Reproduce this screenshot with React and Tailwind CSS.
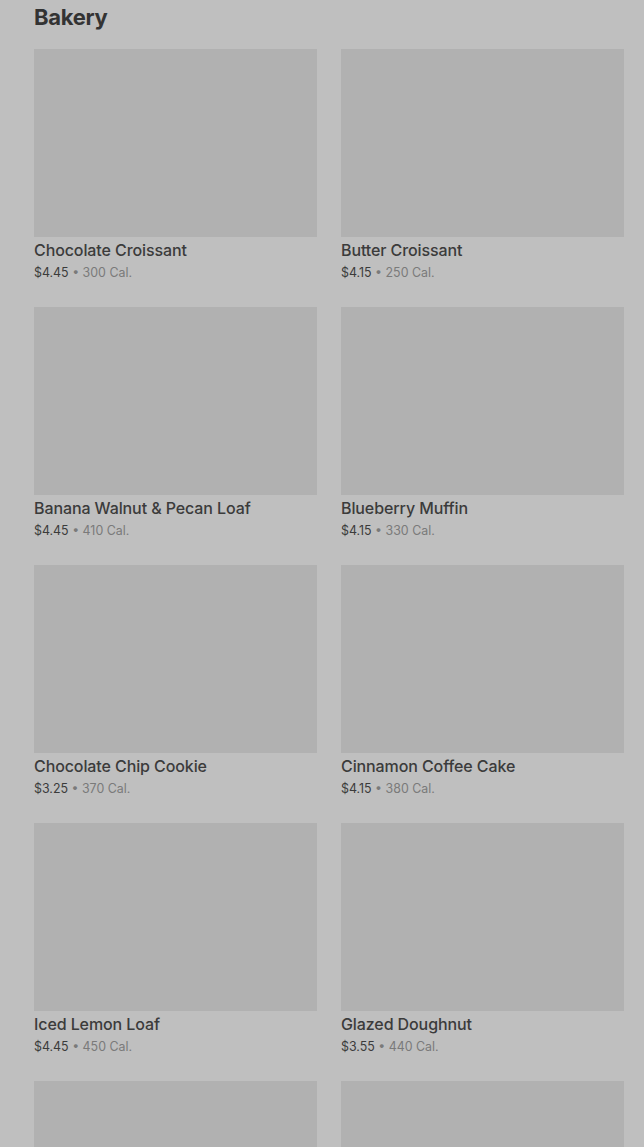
const items = [
  ["Chocolate Croissant", "$4.45", "300 Cal."],
  ["Butter Croissant", "$4.15", "250 Cal."],
  ["Banana Walnut & Pecan Loaf", "$4.45", "410 Cal."],
  ["Blueberry Muffin", "$4.15", "330 Cal."],
  ["Chocolate Chip Cookie", "$3.25", "370 Cal."],
  ["Cinnamon Coffee Cake", "$4.15", "380 Cal."],
  ["Iced Lemon Loaf", "$4.45", "450 Cal."],
  ["Glazed Doughnut", "$3.55", "440 Cal."],
];

export default function App() {
  return (
    <div
      className="w-[644px] h-[1147px] overflow-hidden bg-[#bfbfbf] pl-[34px] pr-[20px]"
      style={{ fontFamily: "Inter, 'Noto Sans', sans-serif" }}
    >
      <h2 className="text-[22px] leading-7 font-bold text-[#333333] tracking-[-0.3px] pt-[3px] mb-[18px]">
        Bakery
      </h2>
      <div className="grid grid-cols-2 gap-x-[24px] gap-y-[24px]">
        {items.map(([name, price, cal]) => (
          <div key={name} className="flex flex-col">
            <div className="h-[188px] bg-[#b1b1b1]" />
            <div className="mt-[1px] text-[16px] leading-6 font-medium text-[#3b3b3b] tracking-[-0.1px]">{name}</div>
            <div className="mt-[1px] text-[12.4px] leading-5 text-[#3b3b3b]">
              {price}
              <span className="text-[#7a7a7a]"> • {cal}</span>
            </div>
          </div>
        ))}
        <div className="h-[188px] bg-[#b1b1b1]" />
        <div className="h-[188px] bg-[#b1b1b1]" />
      </div>
    </div>
  );
}
